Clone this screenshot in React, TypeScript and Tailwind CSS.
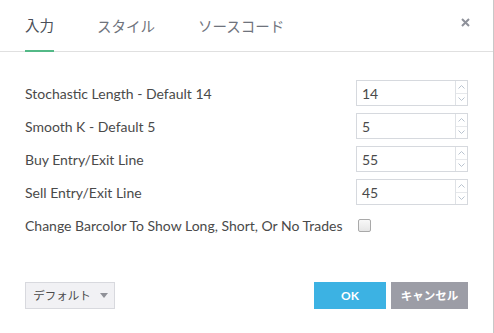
import React from 'react';

const font = { fontFamily: '"Lato", "Noto Sans CJK JP", sans-serif' };

const fields = [
  { label: 'Stochastic Length - Default 14', value: '14' },
  { label: 'Smooth K - Default 5', value: '5' },
  { label: 'Buy Entry/Exit Line', value: '55' },
  { label: 'Sell Entry/Exit Line', value: '45' },
];

function Spinner({ value }: { value: string }) {
  return (
    <div className="flex h-[26px] w-[112px] border border-[#d6d9de] bg-white">
      <div className="flex flex-1 items-center pl-[5px] text-[14px] text-[#4a4a4a]">{value}</div>
      <div className="flex w-[12px] flex-col border-l border-[#dfe2e6]">
        <div className="flex flex-1 items-center justify-center border-b border-[#e6e8eb]">
          <svg width="7" height="4" viewBox="0 0 7 4">
            <path d="M0.5 3.5 L3.5 0.5 L6.5 3.5" fill="none" stroke="#b9c3cf" strokeWidth="1" />
          </svg>
        </div>
        <div className="flex flex-1 items-center justify-center">
          <svg width="7" height="4" viewBox="0 0 7 4">
            <path d="M0.5 0.5 L3.5 3.5 L6.5 0.5" fill="none" stroke="#b9c3cf" strokeWidth="1" />
          </svg>
        </div>
      </div>
    </div>
  );
}

export default function App() {
  return (
    <div className="flex h-[333px] w-[494px] flex-col border-r border-[#c8c8c8] bg-white" style={font}>
      <div className="flex h-[52px] items-end border-b border-[#e0e0e0] px-[25px]">
        <div className="flex flex-1 gap-[43px] text-[14.5px]">
          <div className="-mb-px flex h-[44px] items-center border-b-2 border-[#53b987] pb-[6px] text-[#4a4f59]">入力</div>
          <div className="-mb-px flex h-[44px] items-center pb-[6px] text-[#6f737c]">スタイル</div>
          <div className="-mb-px flex h-[44px] items-center pb-[6px] text-[#6f737c]">ソースコード</div>
        </div>
        <div className="mb-[24px] mr-[-2px] flex h-[10px] w-[10px] items-center justify-center">
          <svg width="9" height="9" viewBox="0 0 9 9">
            <path d="M1 1 L8 8 M8 1 L1 8" stroke="#8e919a" strokeWidth="2" />
          </svg>
        </div>
      </div>

      <div className="flex flex-col gap-[7px] pl-[25px] pr-[25px] pt-[28px]">
        {fields.map((f) => (
          <div key={f.label} className="flex h-[26px] items-center justify-between">
            <span className="text-[14px] text-[#4a4a4a]">{f.label}</span>
            <Spinner value={f.value} />
          </div>
        ))}
        <div className="flex h-[26px] items-center gap-[15px]">
          <span className="text-[14px] text-[#4a4a4a]">Change Barcolor To Show Long, Short, Or No Trades</span>
          <div className="h-[13px] w-[13px] rounded-[2px] border border-[#a9a9a9] bg-gradient-to-b from-[#f8f8f8] to-[#e6e6e6]" />
        </div>
      </div>

      <div className="mt-auto flex items-center px-[25px] pb-[24px]">
        <button className="flex h-[27px] w-[90px] items-center justify-center gap-[9px] border border-[#d8d9de] bg-[#f1f1f4] pl-[1px] text-[11.5px] text-[#4a4a4a]">
          デフォルト
          <svg width="8" height="5" viewBox="0 0 8 5">
            <path d="M0 0 L8 0 L4 5 Z" fill="#8f9097" />
          </svg>
        </button>
        <div className="flex-1" />
        <button className="h-[27px] w-[72px] bg-[#3cb2e3] text-[12px] font-bold text-white">OK</button>
        <button className="ml-[5px] h-[27px] w-[77px] bg-[#9c9da6] text-[11.5px] font-bold text-white">キャンセル</button>
      </div>
    </div>
  );
}
